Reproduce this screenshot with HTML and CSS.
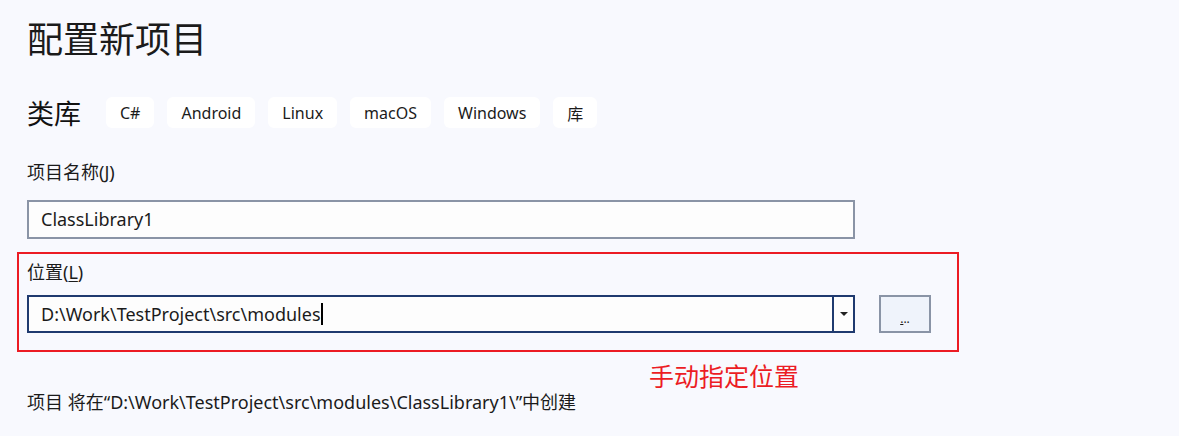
FILE: index.html
```html
<!DOCTYPE html>
<html lang="zh-CN">
<head>
<meta charset="utf-8">
<title>配置新项目</title>
<link rel="stylesheet" href="styles.css">
</head>
<body>
<div class="page">
  <h1 class="title">配置新项目</h1>
  <div class="template-row">
    <span class="template-name">类库</span>
    <span class="tag">C#</span>
    <span class="tag">Android</span>
    <span class="tag">Linux</span>
    <span class="tag">macOS</span>
    <span class="tag">Windows</span>
    <span class="tag">库</span>
  </div>

  <div class="field">
    <div class="label">项目名称(<u>J</u>)</div>
    <div class="input">ClassLibrary1</div>
  </div>

  <div class="highlight">
    <div class="label">位置(<u>L</u>)</div>
    <div class="location-row">
      <div class="combo">
        <div class="combo-text">D:\Work\TestProject\src\modules<span class="caret"></span></div>
        <div class="combo-btn"><span class="arrow"></span></div>
      </div>
      <div class="browse"><span><u>.</u>..</span></div>
    </div>
  </div>

  <div class="note">手动指定位置</div>
  <div class="summary">项目 将在“D:\Work\TestProject\src\modules\ClassLibrary1\”中创建</div>
</div>
</body>
</html>
```

FILE: styles.css
```css
html, body {
  margin: 0;
  padding: 0;
  background: #f8f9fe;
}
body {
  font-family: "Noto Sans", "Noto Sans CJK SC", sans-serif;
  color: #1b1b1b;
}
.page {
  padding: 0 27px;
  width: 1125px;
  height: 436px;
  overflow: hidden;
}
.title {
  margin: 0;
  padding-top: 12px;
  font-family: "Noto Sans CJK SC", sans-serif;
  font-weight: 400;
  font-size: 36px;
  line-height: 50px;
  color: #1b1b1b;
}
.template-row {
  display: flex;
  align-items: center;
  gap: 13px;
  margin-top: 35px;
  height: 31px;
}
.template-name {
  font-family: "Noto Sans CJK SC", sans-serif;
  font-size: 27px;
  line-height: 31px;
  margin-right: 12px;
  color: #111;
}
.tag {
  display: flex;
  align-items: center;
  height: 31px;
  padding: 0 14px;
  background: #ffffff;
  border-radius: 6px;
  font-size: 16px;
  color: #1b1b1b;
}
.field {
  margin-top: 32px;
}
.label {
  font-size: 18px;
  line-height: 24px;
  color: #1b1b1b;
}
.label u {
  text-underline-offset: 2px;
}
.input {
  box-sizing: border-box;
  margin-top: 16px;
  width: 828px;
  height: 39px;
  border: 2px solid #8a94a6;
  background: #fdfdfd;
  padding-left: 12px;
  font-size: 18px;
  line-height: 35px;
  color: #1b1b1b;
}
.highlight {
  box-sizing: border-box;
  margin-top: 13px;
  margin-left: -10px;
  width: 942px;
  height: 100px;
  border: 2px solid #ec1c24;
  padding: 6px 8px 0;
}
.location-row {
  display: flex;
  gap: 24px;
  margin-top: 11px;
}
.combo {
  box-sizing: border-box;
  display: flex;
  width: 828px;
  height: 38px;
  border: 2px solid #1f3a6f;
  background: #fdfdfd;
}
.combo-text {
  flex: 1;
  padding-left: 12px;
  font-size: 18px;
  line-height: 34px;
  color: #1b1b1b;
  display: flex;
  align-items: center;
}
.caret {
  display: inline-block;
  width: 2px;
  height: 22px;
  background: #000;
  margin-left: 0;
}
.combo-btn {
  width: 19px;
  border-left: 2px solid #1f3a6f;
  display: flex;
  align-items: center;
  justify-content: center;
}
.arrow {
  width: 0;
  height: 0;
  border-left: 4px solid transparent;
  border-right: 4px solid transparent;
  border-top: 4px solid #222;
}
.browse {
  box-sizing: border-box;
  width: 52px;
  height: 38px;
  border: 2px solid #8a94a6;
  background: #eff3fb;
  display: flex;
  align-items: center;
  justify-content: center;
  font-size: 12px;
  color: #1b1b1b;
  padding-top: 8px;
}
.note {
  margin-top: 8px;
  margin-left: 622px;
  font-family: "Noto Sans CJK SC", sans-serif;
  font-size: 25px;
  line-height: 30px;
  color: #ec1c24;
}
.summary {
  margin-top: 0;
  font-size: 18px;
  line-height: 24px;
  color: #1b1b1b;
}
```
